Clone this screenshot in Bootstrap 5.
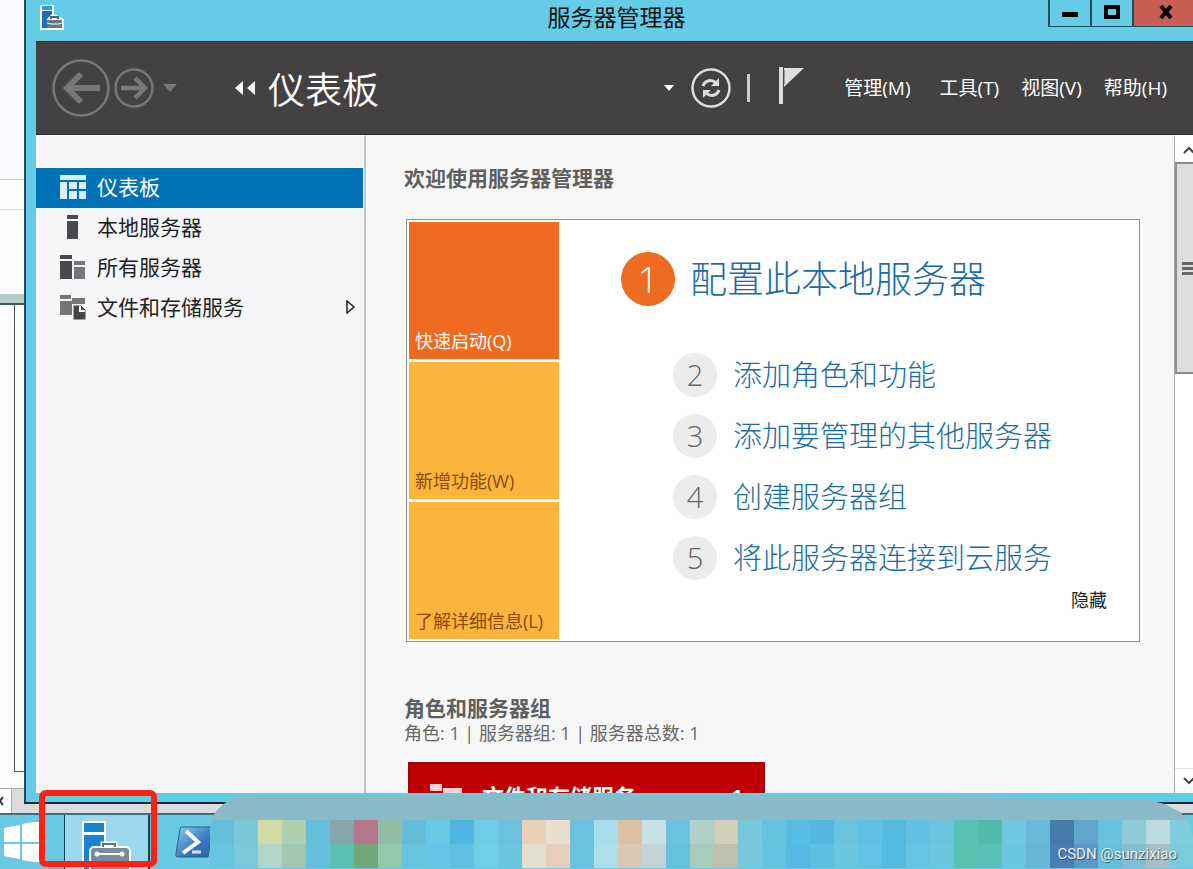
<!DOCTYPE html>
<html lang="zh-CN">
<head>
<meta charset="utf-8">
<meta name="viewport" content="width=device-width, initial-scale=1">
<title>服务器管理器</title>
<link rel="stylesheet" href="https://cdn.jsdelivr.net/npm/bootstrap@5.3.0/dist/css/bootstrap.min.css">
<style>
  body { font-family: "Open Sans", "Noto Sans CJK SC", sans-serif; background: #dcdcdc; color: #222; line-height: 1.5; }
  button { border: 0; background: none; padding: 0; color: inherit; }
  svg { display: block; flex: none; }

  /* windows behind the manager */
  .behind { width: 24px; background: #fdfdff; }
  .behind-head { height: 180px; background: #f8f8ff; border-bottom: 1px solid #c9c9d6; }
  .behind-row { height: 30px; border-bottom: 1px solid #d6d0e6; }
  .behind-gap { height: 84px; }
  .behind-band { height: 11px; background: #b5cbc9; border-bottom: 2px solid #44595a; }
  .behind-page { margin-left: 14px; border-left: 1px solid #555; border-bottom: 1px solid #555; }
  .behind-foot { height: 16px; }
  .behind-scroll { height: 25px; border-top: 1px solid #aaa; background: #dcdcdc; }
  .behind-scroll button { width: 12px; background: #fff; border-right: 1px solid #aaa; }

  /* window frame */
  .shrinkable { min-height: 0; min-width: 0; }
  .win { border-left: 2px solid #1c4a5e; border-bottom: 2px solid #0d2c3c; background: #65cce8; padding: 0 0 9px 10px; margin-bottom: 9px; }
  .titlebar { height: 41px; }
  .titlebar h1 { font-size: 23px; line-height: 34px; color: #111; padding-left: 120px; }
  .cap { height: 27px; border: solid #1d4c5c; border-width: 0 0 1px 2px; padding-bottom: 3px; }
  .cap-s { width: 42px; }
  .cap-x { width: 61px; background: #c75f55; padding-left: 4px; }

  .topbar { height: 94px; background: #434142; color: #fff; padding: 0 26px 0 16px; border-top: 1px solid #2b2b2b; border-bottom: 1px solid #2b2b2b; }
  .topbar h2 { font-size: 37px; line-height: 48px; font-weight: 350; padding-top: 4px; }
  .menus { gap: 22px; margin-left: 39px; }
  .menu-link { font-size: 19px; line-height: 28px; color: #fff; text-decoration: none; }
  .menu-link:first-child { margin-right: 7px; }

  .side { width: 330px; background: #f6f6f8; border-right: 2px solid #c6c6c8; padding-top: 32px; border-top: 1px solid #fff; }
  .side-link { height: 40px; font-size: 21px; line-height: 30px; color: #222; text-decoration: none; padding: 0 8px 2px 24px; gap: 11px; }
  .side-link.on { background: #0072b8; color: #fff; margin-right: 1px; }

  .content { background: #f7f7f7; padding: 28px 34px 0 40px; }
  .content h3 { font-size: 21px; line-height: 30px; color: #5f5f5f; margin-left: -2px; }
  .welcome { background: #fff; border: 1px solid #929292; padding: 2px; margin-top: 26px; }
  .tiles { width: 150px; gap: 3px; }
  .tile { height: 137px; padding: 0 6px 4px; font-size: 18px; line-height: 28px; background: #fcb53c; color: #8a4a00; text-align: left; }
  .tile.on { background: #ee6b1f; color: #fff; }
  .steps { padding: 30px 30px 0 62px; }
  .steps a { color: #1a6ca6; text-decoration: none; font-weight: 300; }
  .step-first { gap: 15px; font-size: 37px; line-height: 54px; }
  .step-list { padding-left: 52px; margin-top: 38px; }
  .step-item { gap: 16px; height: 61px; font-size: 29px; line-height: 44px; }
  .num-big { width: 54px; height: 54px; font-size: 37px; line-height: 54px; background: #ee6b1f; color: #fff; font-weight: 300; }
  .num { width: 44px; height: 44px; font-size: 29px; line-height: 44px; background: #ececec; color: #666; font-weight: 300; }
  .hide-btn { font-size: 18px; line-height: 24px; color: #222; }
  .groups { margin-top: 51px; }
  .counts { font-size: 18px; line-height: 20px; color: #686868; margin-left: -2px; }
  .role { width: 357px; height: 60px; margin: 19px 0 0 2px; background: #c00000; border: 2px solid #8e0f0f; color: #fff; padding: 16px 20px; font-size: 22px; line-height: 32px; }

  .sbar { width: 19px; background: #fff; border-left: 1px solid #aaa; border-top: 2px solid #fff; }
  .sbar button { height: 25px; }
  .thumb { height: 35%; background: #dedede; border: 2px solid #8c8c8c; border-right: 0; }

  /* taskbar */
  .taskbar { height: 56px; background: #6bcae3; border-top: 2px solid #3f6e7e; }
  .start { width: 40px; }
  .task-on { width: 86px; margin-left: 24px; background: #9bd7ee; border: solid #163f52; border-width: 0 2px 0 1px; }
  .task-ps { margin-left: 23px; }
  .marker { left: 39px; bottom: 2px; width: 118px; height: 77px; border: 6px solid #ff2014; border-radius: 7px; z-index: 3; }
  .mosaic { left: 210px; right: 0; bottom: 1px; height: 73px; border-top-left-radius: 42px 34px; z-index: 2;
    clip-path: polygon(0 0, calc(100% - 240px) 0, calc(100% - 190px) 3px, calc(100% - 45px) 5px, calc(100% - 28px) 9px, calc(100% - 13px) 17px, calc(100% - 4px) 28px, 100% 42px, 100% 100%, 0 100%); }
  .mosaic-top { height: 25px; background: #8abac7; }
  .mosaic-row { height: 24px; }
  .mosaic-row span { flex: 0 0 24px; }
  .stamp { right: 16px; bottom: 5px; font: 15px/20px Roboto, sans-serif; color: #e8f0f4; text-shadow: 1px 1px 1px #34505f; z-index: 4; }
</style>
</head>
<body class="vh-100 d-flex flex-column overflow-hidden position-relative">

<div class="d-flex flex-grow-1 shrinkable">
  <div class="behind d-flex flex-column flex-shrink-0">
    <div class="behind-head"></div>
    <div class="behind-row"></div>
    <div class="behind-gap"></div>
    <div class="behind-band"></div>
    <div class="behind-page flex-grow-1"></div>
    <div class="behind-foot"></div>
    <div class="behind-scroll d-flex">
      <button aria-label="向左滚动"><svg width="10" height="12" viewBox="0 0 10 12" fill="none" stroke="#333" stroke-width="2"><path d="M3 2 0 6l3 4"/></svg></button>
    </div>
  </div>

  <main class="win d-flex flex-column flex-grow-1 shrinkable">
    <header class="titlebar d-flex flex-shrink-0">
      <svg class="mt-1 ms-1" width="25" height="26" viewBox="0 0 25 26">
        <path d="M0 1h14v9l10 5v11H0z" fill="#fff"/>
        <path d="M2 2h10v4H2z" fill="#2e9bdc"/><path d="M2 7h10v3l-5 5v9H2z" fill="#1c6fb8"/>
        <path d="M7 16h15v8H7z" fill="#647887"/><path d="M7 19l4 1h8l3-1" fill="none" stroke="#fff" stroke-width="1"/><path d="M11 15v-2h7v2" fill="none" stroke="#4c6475" stroke-width="2"/>
      </svg>
      <h1 class="flex-grow-1 text-center m-0 fw-normal">服务器管理器</h1>
      <button class="cap cap-s d-flex align-items-center justify-content-center" aria-label="最小化"><svg width="16" height="12"><path d="M0 6h16v5H0z" fill="#000"/></svg></button>
      <button class="cap cap-s d-flex align-items-center justify-content-center" aria-label="最大化"><svg width="16" height="14"><path d="M2 2h12v10H2z" fill="none" stroke="#000" stroke-width="4"/></svg></button>
      <button class="cap cap-x d-flex align-items-center justify-content-center" aria-label="关闭"><svg width="14" height="14"><path d="M2 1l10 12M12 1 2 13" stroke="#000" stroke-width="4"/></svg></button>
    </header>

    <nav class="topbar d-flex align-items-center flex-shrink-0">
      <button aria-label="后退"><svg width="58" height="60" viewBox="0 0 58 60" fill="none" stroke="#777"><circle cx="29" cy="30" r="27.500" stroke-width="2.500"/><path d="M48 30H16M29 16 15 30l14 14" stroke-width="6"/></svg></button>
      <button class="ms-1" aria-label="前进"><svg width="40" height="40" viewBox="0 0 40 40" fill="none" stroke="#777"><circle cx="20" cy="20" r="18.500" stroke-width="2.500"/><path d="M7 20h24M21 10l10 10-10 10" stroke-width="4.500"/></svg></button>
      <button class="ms-2" aria-label="历史记录"><svg width="16" height="10"><path d="M1 1h14L8 9z" fill="#777"/></svg></button>
      <div class="d-flex align-items-center ms-5 ps-2">
        <svg width="22" height="14"><path d="M9 0v14L1 7zM21 0v14l-8-7z" fill="#fff"/></svg>
        <h2 class="m-0 ms-2 ps-1">仪表板</h2>
      </div>
      <div class="d-flex align-items-center ms-auto">
        <button aria-label="更多"><svg width="12" height="8"><path d="M1 1h10L6 7z" fill="#fff"/></svg></button>
        <button class="ms-3" aria-label="刷新"><svg width="40" height="42" viewBox="0 0 40 42" fill="none" stroke="#ddd"><circle cx="20" cy="21" r="18.500" stroke-width="2.500"/><path d="M12 19c2-6 9-7 13-3M28 23c-2 6-9 7-13 3" stroke-width="3"/><path d="M28 11v8h-8zM12 31v-8h8z" fill="#ddd" stroke="none"/></svg></button>
        <svg class="ms-3" width="4" height="28"><path d="M0 0h3v28H0z" fill="#ccc"/></svg>
        <button class="ms-4 ps-1 pb-1" aria-label="通知"><svg width="26" height="38" viewBox="0 0 26 38"><path d="M0 0h4v37H0z" fill="#ddd"/><path d="M5 1h20L5 20z" fill="#ddd"/><path d="M5 3v14" stroke="#555"/></svg></button>
        <div class="menus d-flex">
          <a class="menu-link" href="#">管理(M)</a>
          <a class="menu-link" href="#">工具(T)</a>
          <a class="menu-link" href="#">视图(V)</a>
          <a class="menu-link" href="#">帮助(H)</a>
        </div>
      </div>
    </nav>

    <div class="d-flex flex-grow-1 shrinkable">
      <aside class="side flex-shrink-0">
        <a class="side-link on d-flex align-items-center" href="#">
          <svg width="26" height="24"><path d="M0 0h26v5H0zM0 7h7v17H0zM9 7h8v7H9zM19 7h7v7h-7zM9 16h8v8H9zM19 16h7v8h-7z" fill="#d8eefb"/></svg>仪表板</a>
        <a class="side-link d-flex align-items-center" href="#">
          <svg width="26" height="24"><path d="M7 0h11v4H7zM7 6h11v18H7z" fill="#4a4950"/></svg>本地服务器</a>
        <a class="side-link d-flex align-items-center" href="#">
          <svg width="26" height="24"><path d="M0 0h12v4H0zM0 6h12v18H0z" fill="#4a4a4c"/><path d="M14 6h11v4H14zM14 12h11v12H14z" fill="#77757e"/></svg>所有服务器</a>
        <a class="side-link d-flex align-items-center" href="#">
          <svg width="26" height="25"><path d="M0 0h11v4H0zM0 6h12v14H0zM12 3h13v6H12z" fill="#757575"/><path d="M13 10h8l5 5v10H13z" fill="#444" stroke="#f6f6f8"/><path d="M20 11v5h5" fill="none" stroke="#fff" stroke-width="2"/></svg>文件和存储服务
          <svg class="ms-auto" width="10" height="14"><path d="M1 1l7 6-7 6z" fill="none" stroke="#222" stroke-width="1.500"/></svg></a>
      </aside>

      <section class="content flex-grow-1 overflow-hidden">
        <h3 class="mb-0 fw-bold">欢迎使用服务器管理器</h3>
        <div class="welcome d-flex">
          <div class="tiles d-flex flex-column flex-shrink-0">
            <button class="tile on d-flex align-items-end">快速启动(Q)</button>
            <button class="tile d-flex align-items-end">新增功能(W)</button>
            <button class="tile d-flex align-items-end">了解详细信息(L)</button>
          </div>
          <div class="steps flex-grow-1">
            <div class="step-first d-flex align-items-center"><span class="num-big rounded-circle text-center">1</span><a href="#">配置此本地服务器</a></div>
            <div class="step-list">
              <div class="step-item d-flex align-items-center"><span class="num rounded-circle text-center">2</span><a href="#">添加角色和功能</a></div>
              <div class="step-item d-flex align-items-center"><span class="num rounded-circle text-center">3</span><a href="#">添加要管理的其他服务器</a></div>
              <div class="step-item d-flex align-items-center"><span class="num rounded-circle text-center">4</span><a href="#">创建服务器组</a></div>
              <div class="step-item d-flex align-items-center"><span class="num rounded-circle text-center">5</span><a href="#">将此服务器连接到云服务</a></div>
            </div>
            <div class="text-end"><button class="hide-btn">隐藏</button></div>
          </div>
        </div>
        <h3 class="groups mb-0 fw-bold">角色和服务器组</h3>
        <div class="counts">角色: 1 | 服务器组: 1 | 服务器总数: 1</div>
        <div class="role d-flex">
          <svg class="mt-1" width="32" height="28"><path d="M0 0h12v7H0zM13 4h19v8H13zM0 9h12v17H0z" fill="#ffd2d2"/></svg>
          <span class="ms-3 ps-1 fw-bold">文件和存储服务</span><span class="ms-auto fw-bold">1</span>
        </div>
      </section>

      <div class="sbar d-flex flex-column flex-shrink-0">
        <button class="d-flex align-items-center ps-2" aria-label="向上滚动"><svg width="12" height="8" fill="none" stroke="#444" stroke-width="2"><path d="M1 7l5-5 5 5"/></svg></button>
        <div class="flex-grow-1"><div class="thumb d-flex align-items-center justify-content-end"><svg width="11" height="13"><path d="M0 0h11v3H0zM0 5h11v3H0zM0 10h11v3H0z" fill="#666"/></svg></div></div>
        <button class="d-flex align-items-center ps-2 border-top" aria-label="向下滚动"><svg width="12" height="8" fill="none" stroke="#444" stroke-width="2"><path d="M1 1l5 5 5-5"/></svg></button>
      </div>
    </div>
  </main>
</div>

<footer class="taskbar d-flex flex-shrink-0">
  <button class="start" aria-label="开始"><svg width="40" height="40" viewBox="0 0 40 40"><path d="M4 6l16-3v17H4zM22 2l18-3v21H22zM4 22h16v15L4 34zM22 22h18v19l-18-3z" fill="#fff"/></svg></button>
  <button class="task-on overflow-hidden" aria-label="服务器管理器"><svg class="ms-3" width="54" height="54" viewBox="0 0 54 54">
    <path d="M1 6h24v48H1z" fill="#fff"/><path d="M3 8h20v9H3zM3 20h20v34H3z" fill="#1583d6"/>
    <path d="M22 33v-4h12v4" fill="none" stroke="#fff" stroke-width="5"/><rect x="9" y="32" width="40" height="30" rx="4" fill="#788b9b" stroke="#fff" stroke-width="2"/><path d="M22 32v-3h12v3" fill="none" stroke="#5d7384" stroke-width="2"/><path d="M15 39h26" stroke="#fff" stroke-width="2"/><circle cx="16" cy="39" r="2.500" fill="#fff"/><circle cx="41" cy="39" r="2.500" fill="#fff"/></svg></button>
  <button class="task-ps" aria-label="PowerShell"><svg width="40" height="36" viewBox="0 0 40 36"><defs><linearGradient id="ps" x1="0" y1="0" x2="1" y2="1"><stop offset="0" stop-color="#8ed0ee"/><stop offset=".6" stop-color="#3477bd"/><stop offset="1" stop-color="#2f62b0"/></linearGradient></defs><path d="M9 3h31l-5 30H5q-3 0-2-3L7 5q0-2 2-2z" fill="url(#ps)" stroke="#2b5d86"/><path d="M13 7l12 11-15 11" fill="none" stroke="#fff" stroke-width="4"/><path d="M19 28h9" stroke="#cfe6f6" stroke-width="3"/></svg></button>
</footer>

<div class="mosaic position-absolute overflow-hidden">
  <div class="mosaic-top"></div>
  <div class="mosaic-row d-flex" data-colors="66bfda 7ac7d8 d1d9a6 b0cfb0 66bfda 86a6ac b2788a 93bda6 68bdd6 68c9e5 4db6e2 70cbe6 6bc2dc ebd0b8 e9ded0 6bc2dc a9dde9 dcc0a6 c6e0e4 6bc2dc b0d1c9 d0cfb9 77c8da 66c1dc 54bde4 52b8e0 6ac2dd 60c0e4 52b9df 60c1e4 6bc4dc 58c1b3 52bbab 70c7e0 68b9da 457bab 60a6cc 66c2dd 8fcbd6 bddae0 80cddd"></div>
  <div class="mosaic-row d-flex" data-colors="66c5de 7ac8d8 b2d6ca a0c7b2 66bfda 5dbfb2 73a57a 93c8ab 68c4dc 68c5e9 60bfe4 70cee6 6bc5dc e5dfd0 e6d0bd 6bc2dc aedeea dac8b6 c4d3d6 66c2dc a5ccbd bfbfb0 77c8da 66c2e0 54bae4 5ac0e4 6ac6e0 60c3e4 52b9df 66c4e2 6bc6de 58c1b0 58c0b9 6bc7df 68b7da 4a7db3 5b98c9 66bfdb 85bdd0 a9bfc5 7acbdc"></div>
</div>
<div class="marker position-absolute"></div>
<div class="stamp position-absolute">CSDN @sunzixiao</div>

<script>
  document.querySelectorAll('[data-colors]').forEach(function (row) {
    row.dataset.colors.split(' ').forEach(function (c) {
      var cell = document.createElement('span');
      cell.style.backgroundColor = '#' + c;
      row.appendChild(cell);
    });
  });
</script>
<script src="https://cdn.jsdelivr.net/npm/bootstrap@5.3.0/dist/js/bootstrap.bundle.min.js"></script>
</body>
</html>
